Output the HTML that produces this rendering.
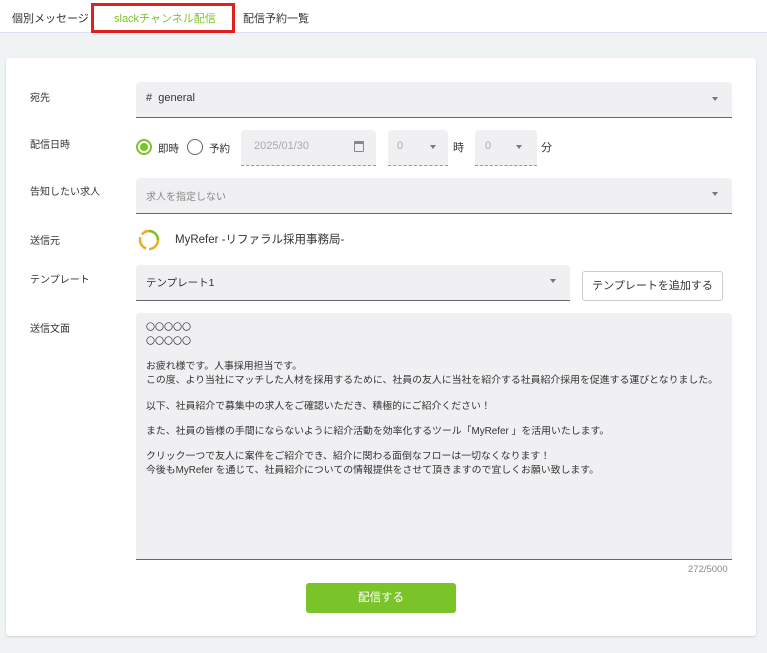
<!DOCTYPE html><html><head><meta charset="utf-8"><style>
*{box-sizing:border-box;margin:0;padding:0}
body{width:767px;height:653px;background:#eff3f3;font-family:"Liberation Sans","Noto Sans CJK JP",sans-serif;color:#333;position:relative;overflow:hidden}
.a{position:absolute}
.top{left:0;top:0;width:767px;height:33px;background:#fff;border-bottom:1px solid #dde;}
.tab{top:10px;font-size:11px}
.card{left:6px;top:58px;width:750px;height:578px;background:#fff;border-radius:3px;box-shadow:0 1px 2px rgba(0,0,0,.15)}
.lbl{left:30px;font-size:10px;color:#333}
.fld{background:#f0f0f2;border-bottom:1px solid #666;border-radius:4px 4px 0 0}
.arr{width:0;height:0;border-left:3.5px solid transparent;border-right:3.5px solid transparent;border-top:4px solid #777}
.t{font-size:9.9px;line-height:13.5px;color:#333;white-space:nowrap}
</style></head><body>
<div class="a top"></div>
<div class="a tab" style="left:12px">個別メッセージ</div>
<div class="a" style="left:91px;top:3px;width:144px;height:30px;border:3px solid #e01f1f"></div>
<div class="a tab" style="left:114px;color:#7ac42a">slackチャンネル配信</div>
<div class="a tab" style="left:243px">配信予約一覧</div>
<div class="a card"></div>

<div class="a lbl" style="top:89px">宛先</div>
<div class="a fld" style="left:136px;top:82px;width:596px;height:36px"></div>
<div class="a" style="left:146px;top:92px;font-size:11px">#&nbsp; general</div>
<div class="a arr" style="left:712px;top:97px"></div>

<div class="a lbl" style="top:136px">配信日時</div>
<div class="a" style="left:136px;top:139px;width:16px;height:16px;border:2px solid #7ac42a;border-radius:50%"></div>
<div class="a" style="left:140px;top:143px;width:8px;height:8px;background:#7ac42a;border-radius:50%"></div>
<div class="a" style="left:158px;top:141px;font-size:10.5px">即時</div>
<div class="a" style="left:187px;top:139px;width:16px;height:16px;border:1.5px solid #666;border-radius:50%"></div>
<div class="a" style="left:209px;top:141px;font-size:10.5px">予約</div>
<div class="a" style="left:241px;top:130px;width:135px;height:36px;background:#f0f0f2;border-bottom:1px dashed #999;border-radius:4px 4px 0 0"></div>
<div class="a" style="left:254px;top:140px;font-size:11px;color:#aaa">2025/01/30</div>
<div class="a" style="left:354px;top:141px;width:10px;height:11px;border:1.5px solid #888;border-top-width:3px;border-radius:1px"></div>
<div class="a" style="left:388px;top:130px;width:60px;height:36px;background:#f0f0f2;border-bottom:1px dashed #999;border-radius:4px 4px 0 0"></div>
<div class="a" style="left:397px;top:140px;font-size:11px;color:#aaa">0</div>
<div class="a arr" style="left:430px;top:145px"></div>
<div class="a" style="left:453px;top:139px;font-size:11px">時</div>
<div class="a" style="left:475px;top:130px;width:62px;height:36px;background:#f0f0f2;border-bottom:1px dashed #999;border-radius:4px 4px 0 0"></div>
<div class="a" style="left:485px;top:140px;font-size:11px;color:#aaa">0</div>
<div class="a arr" style="left:516px;top:145px"></div>
<div class="a" style="left:541px;top:139px;font-size:11px">分</div>

<div class="a lbl" style="top:183px">告知したい求人</div>
<div class="a fld" style="left:136px;top:178px;width:596px;height:36px"></div>
<div class="a" style="left:146px;top:188px;font-size:10px;color:#888">求人を指定しない</div>
<div class="a arr" style="left:712px;top:192px"></div>

<div class="a lbl" style="top:232px">送信元</div>
<svg class="a" style="left:137px;top:228px" width="24" height="24" viewBox="0 0 24 24"><circle cx="12" cy="12" r="9" fill="none" stroke="#e8b020" stroke-width="2.5" stroke-dasharray="14 3"/><path d="M12 3a9 9 0 0 1 9 9" fill="none" stroke="#7ac42a" stroke-width="2.5"/></svg>
<div class="a" style="left:175px;top:231px;font-size:11.5px">MyRefer -リファラル採用事務局-</div>

<div class="a lbl" style="top:271px">テンプレート</div>
<div class="a fld" style="left:136px;top:265px;width:434px;height:36px"></div>
<div class="a" style="left:146px;top:275px;font-size:10.5px">テンプレート1</div>
<div class="a arr" style="left:550px;top:279px"></div>
<div class="a" style="left:582px;top:271px;width:141px;height:30px;border:1px solid #ccc;border-radius:3px;font-size:11px;text-align:center;line-height:28px;white-space:nowrap">テンプレートを追加する</div>

<div class="a lbl" style="top:320px">送信文面</div>
<div class="a" style="left:136px;top:313px;width:596px;height:247px;background:#f0f0f2;border-bottom:1px solid #666;border-radius:4px 4px 0 0"></div>
<div class="a t" style="left:146px;top:321px;font-size:9px">〇〇〇〇〇<br>〇〇〇〇〇</div>
<div class="a t" style="left:146px;top:360px">お疲れ様です。人事採用担当です。<br>この度、より当社にマッチした人材を採用するために、社員の友人に当社を紹介する社員紹介採用を促進する運びとなりました。</div>
<div class="a t" style="left:146px;top:400px">以下、社員紹介で募集中の求人をご確認いただき、積極的にご紹介ください！</div>
<div class="a t" style="left:146px;top:425px">また、社員の皆様の手間にならないように紹介活動を効率化するツール「MyRefer 」を活用いたします。</div>
<div class="a t" style="left:146px;top:450px">クリック一つで友人に案件をご紹介でき、紹介に関わる面倒なフローは一切なくなります！<br>今後もMyRefer を通じて、社員紹介についての情報提供をさせて頂きますので宜しくお願い致します。</div>
<div class="a" style="left:688px;top:564px;font-size:9.5px;color:#888">272/5000</div>
<div class="a" style="left:306px;top:583px;width:150px;height:30px;background:#7ac42a;border-radius:3px;color:#fff;font-size:11.5px;text-align:center;line-height:30px">配信する</div>
</body></html>
